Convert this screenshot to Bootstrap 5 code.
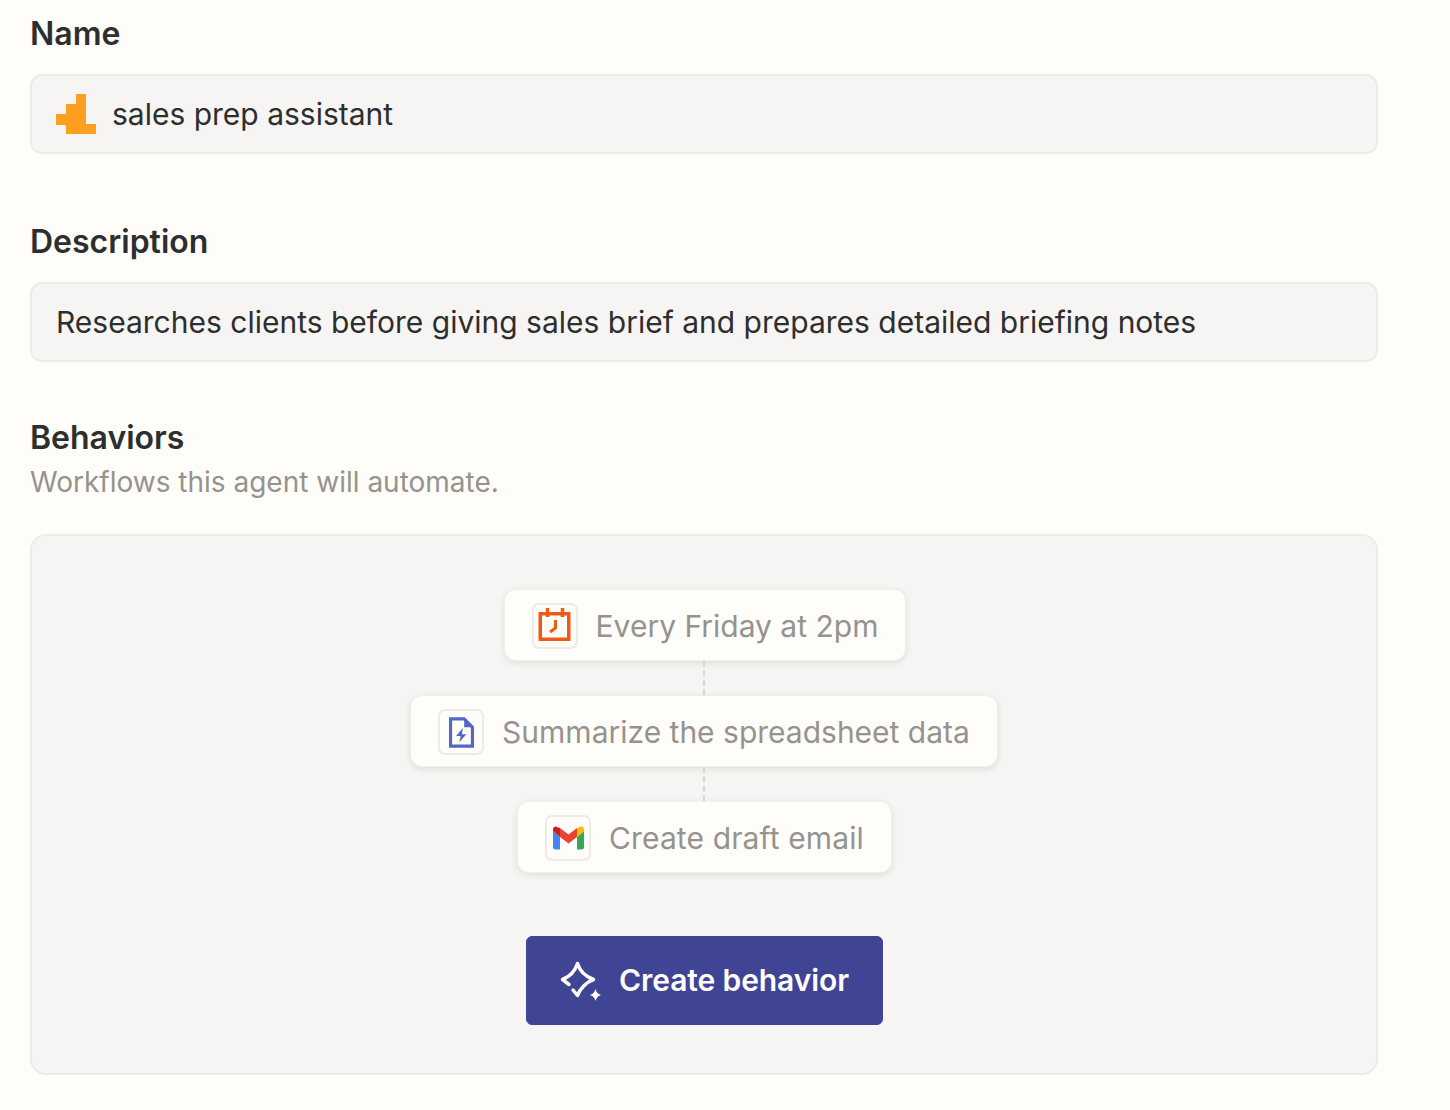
<!DOCTYPE html>
<html lang="en">
<head>
    <meta charset="UTF-8">
    <title>Agent settings</title>
    <link href="https://cdn.jsdelivr.net/npm/bootstrap@5.3.0/dist/css/bootstrap.min.css" rel="stylesheet">
    <style>
        html, body { height: 100%; }
        body {
            background-color: #fffdf9;
            font-family: Inter, "Liberation Sans", sans-serif;
            color: #2d2e2e;
            overflow: hidden;
        }
        .page-wrap { width: 1348px; margin-left: 30px; padding-top: 14px; }
        .field-label { font-size: 32px; font-weight: 600; line-height: 40px; margin: 0; color: #2d2e2e; }
        .field-box {
            height: 80px;
            margin-top: 20px;
            padding: 0 24px;
            background: #f6f5f3;
            border: 2px solid #ecebe8;
            border-radius: 12px;
            font-size: 30px;
            gap: 16px;
        }
        .gap-name { margin-bottom: 68px; }
        .gap-desc { margin-bottom: 56px; }
        .field-hint { font-size: 28px; line-height: 40px; color: #95938e; margin-top: 4px; }
        .behaviors-box {
            height: 541px;
            margin-top: 32px;
            padding-top: 53px;
            background: #f6f5f3;
            border: 2px solid #ecebe8;
            border-radius: 16px;
        }
        .step-card {
            height: 72px;
            padding: 2px 27px 0;
            gap: 18px;
            background: #fffdf9;
            border: 1px solid #f0efec;
            border-radius: 12px;
            box-shadow: 0 2px 6px rgba(70, 60, 40, .12);
            font-size: 30px;
            color: #95938e;
            white-space: nowrap;
        }
        .step-first { margin-left: 2px; }
        .step-last { letter-spacing: .12px; margin-left: 1px; }
        .step-icon {
            width: 46px;
            height: 46px;
            background: #fffdf9;
            border: 2px solid #ecebe8;
            border-radius: 7px;
        }
        .step-link { width: 0; height: 34px; border-left: 2px dashed #d9d7d2; }
        .create-btn {
            margin-top: 63px;
            width: 357px;
            height: 89px;
            gap: 18px;
            background: #3f4494;
            border-color: #3f4494;
            border-radius: 6px;
            color: #fffdf9;
            font-size: 30px;
            font-weight: 600;
            letter-spacing: -.1px;
        }
        .create-btn:hover { background: #363b85; border-color: #363b85; color: #fffdf9; }
    </style>
</head>
<body>
    <div class="page-wrap">
        <p class="field-label">Name</p>
        <div class="field-box d-flex align-items-center gap-name">
            <svg width="40" height="40" viewBox="0 0 40 40" fill="#ff9f1f" aria-hidden="true">
                <rect x="20" y="0" width="10" height="11"/>
                <rect x="10" y="10" width="20" height="11"/>
                <rect x="0" y="20" width="30" height="11"/>
                <rect x="10" y="30" width="30" height="10"/>
            </svg>
            <span>sales prep assistant</span>
        </div>

        <p class="field-label">Description</p>
        <div class="field-box d-flex align-items-center gap-desc">
            <span>Researches clients before giving sales brief and prepares detailed briefing notes</span>
        </div>

        <p class="field-label">Behaviors</p>
        <div class="field-hint">Workflows this agent will automate.</div>

        <div class="behaviors-box d-flex flex-column align-items-center">
            <div class="step-card step-first d-flex align-items-center">
                <span class="step-icon d-flex align-items-center justify-content-center">
                    <svg width="34" height="36" viewBox="0 0 34 36" fill="none" stroke="#ef5a14" stroke-width="3.500" aria-hidden="true">
                        <rect x="2.250" y="5.750" width="28.500" height="25.500"/>
                        <path d="M9.500 0v9M24.500 0v9"/>
                        <path d="M17.500 12v8l-5.500 4" stroke-width="3"/>
                    </svg>
                </span>
                <span>Every Friday at 2pm</span>
            </div>
            <div class="step-link"></div>
            <div class="step-card d-flex align-items-center">
                <span class="step-icon d-flex align-items-center justify-content-center">
                    <svg width="25" height="31" viewBox="0 0 28 34" fill="none" aria-hidden="true">
                        <path d="M1.750 1.750H17L26.250 11V32.250H1.750Z" stroke="#5566c4" stroke-width="3.500"/>
                        <path d="M17 1.750V11H26.250Z" fill="#5566c4"/>
                        <path d="M15.500 12 8 21h5l-1.500 7L19.500 19h-5z" fill="#5566c4"/>
                    </svg>
                </span>
                <span>Summarize the spreadsheet data</span>
            </div>
            <div class="step-link"></div>
            <div class="step-card step-last d-flex align-items-center">
                <span class="step-icon d-flex align-items-center justify-content-center">
                    <svg width="31" height="24" viewBox="0 0 31 24" aria-hidden="true">
                        <path d="M0 5v16a2.500 2.500 0 0 0 2.500 2.500H7V11z" fill="#4285f4"/>
                        <path d="M24 11v12.500h4.500A2.500 2.500 0 0 0 31 21V5z" fill="#34a853"/>
                        <path d="M24 2v9l7-6V3.500C31 .8 27.800 -.5 26 1.500z" fill="#fbbc04"/>
                        <path d="M7 11V2l8.500 6.500L24 2v9l-8.500 6.500z" fill="#ea4335"/>
                        <path d="M0 3.500V5l7 6V2L5 1.500C3.200 -.5 0 .8 0 3.500z" fill="#c5221f"/>
                    </svg>
                </span>
                <span>Create draft email</span>
            </div>
            <button type="button" class="btn create-btn d-flex align-items-center justify-content-center">
                <svg width="42" height="42" viewBox="0 0 42 42" fill="none" aria-hidden="true">
                    <path d="M14 30 18.500 35.500C21 29 27 22 34.500 19.500C25 16 20.500 10 18.500 3.500C16 11 10 17 3.500 19.500L10 24.500" stroke="#fffdf9" stroke-width="3.500" stroke-linejoin="round" stroke-linecap="round"/>
                    <path d="M36.500 29c.8 3.200 2.200 4.700 5.500 6-3.300 1.300-4.700 2.800-5.500 6-.8-3.200-2.200-4.700-5.500-6 3.300-1.300 4.700-2.800 5.500-6z" fill="#fffdf9"/>
                </svg>
                <span>Create behavior</span>
            </button>
        </div>
    </div>
    <script src="https://cdn.jsdelivr.net/npm/bootstrap@5.3.0/dist/js/bootstrap.bundle.min.js"></script>
</body>
</html>
